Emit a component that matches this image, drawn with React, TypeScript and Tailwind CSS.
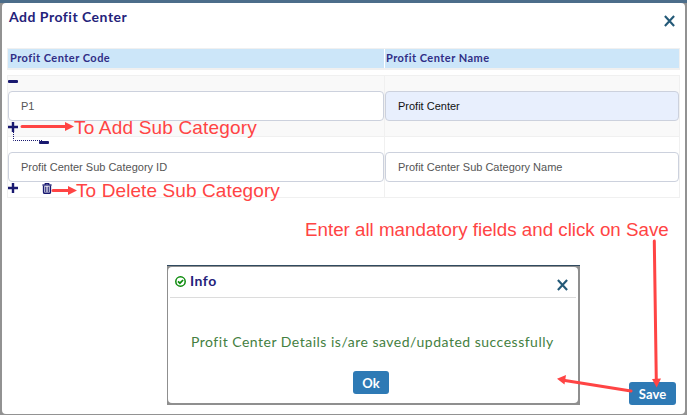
import React from "react";

const sans = "font-['Liberation_Sans',Arial,sans-serif]";
const lato = "font-['Lato',sans-serif]";

function Plus() {
  return (
    <svg width="10" height="10" viewBox="0 0 10 10" className="block">
      <path d="M5 0V10M0 5H10" stroke="#191970" strokeWidth="2.4" />
    </svg>
  );
}

function Minus() {
  return <div className="h-[3px] w-[10px] rounded-[1px] bg-[#191970]" />;
}

function Trash() {
  return (
    <svg width="10" height="11" viewBox="0 0 10 11" className="block" fill="none" stroke="#191970">
      <path d="M.4 2H9.6" strokeWidth="1.3" />
      <path d="M3.2 2V.6H6.8V2" strokeWidth="1.1" />
      <path d="M1.6 2.5V9.3Q1.6 10.3 2.6 10.3H7.4Q8.4 10.3 8.4 9.3V2.5" strokeWidth="1.5" />
      <path d="M3.5 3.6V9.2M5 3.6V9.2M6.5 3.6V9.2" strokeWidth=".8" />
    </svg>
  );
}

function Close() {
  return (
    <svg width="11" height="12" viewBox="0 0 11 12" className="block">
      <path d="M.9 1L10.1 11M10.1 1L.9 11" stroke="#245a78" strokeWidth="2.1" />
    </svg>
  );
}

function Field({ children, filled }: { children: React.ReactNode; filled?: boolean }) {
  return (
    <div
      className={`flex h-[30px] items-center rounded-[4px] border border-[#ccd1dd] pl-3 text-[11px] ${sans} ${
        filled ? "bg-[#e8effd] text-[#111]" : "bg-white text-[#555]"
      }`}
    >
      {children}
    </div>
  );
}

function InfoDialog() {
  return (
    <div className="absolute left-[167px] top-[265px] h-[140px] w-[413px] border-t border-[#304a60] bg-[#8f8f8f] pb-[2px] pl-[1px] pr-[2px] pt-[1px]">
      <div className="flex h-[136px] flex-col rounded-[4px] bg-white">
        <div className="mx-[2px] flex h-[31px] items-start justify-between border-b border-[#dcdcdc] pl-[5px] pr-[8px]">
          <div className="flex items-center pt-[5px]">
            <svg width="11" height="11" viewBox="0 0 11 11" fill="none" stroke="#0a8a0a">
              <circle cx="5.5" cy="5.5" r="4.7" strokeWidth="1.5" />
              <path d="M3 5.4L4.9 7.2L8.1 4" strokeWidth="1.7" />
            </svg>
            <span className={`ml-[4px] text-[14px] font-bold leading-[18px] tracking-[0.5px] text-[#24227a] ${lato}`}>Info</span>
          </div>
          <div className="pt-[12px]"><Close /></div>
        </div>
        <div className={`mt-[35px] whitespace-nowrap pl-[23px] text-[14px] leading-[18px] tracking-[0.5px] text-[#44803f] ${lato}`}>
          Profit Center Details is/are saved/updated successfully
        </div>
        <button className={`ml-[185px] mt-[20px] h-[23px] w-[36px] rounded-[3px] bg-[#2e7ab5] text-[13px] font-bold leading-[22px] tracking-[0.1px] text-white ${lato}`}>
          Ok
        </button>
      </div>
    </div>
  );
}

function Notes() {
  const text = `absolute whitespace-nowrap leading-[20px] text-[#ff4444] ${sans}`;
  return (
    <>
      <span className={`${text} left-[74px] top-[118px] text-[19px] tracking-[0.18px]`}>To Add Sub Category</span>
      <span className={`${text} left-[76px] top-[181px] text-[19px] tracking-[0.1px]`}>To Delete Sub Category</span>
      <span className={`${text} left-[305px] top-[220px] text-[18.75px]`}>Enter all mandatory fields and click on Save</span>
      <svg className="absolute left-0 top-0" width="687" height="415" fill="#ff4444" stroke="#ff4444">
        <path d="M22 126.5H67M53 190.5H71M654.3 241L656.3 381M631 391L565 380.5" strokeWidth="3" strokeLinecap="round" fill="none" />
        <path stroke="none" d="M65 122L74 126.5L65 131ZM68 186L77 190.5L68 195ZM652 379L661 378.5L656.7 387.5ZM566 375L557 378.7L564.5 384.5Z" />
      </svg>
    </>
  );
}

export default function App() {
  return (
    <div className="relative h-[415px] w-[687px] overflow-hidden border-t-[3px] border-[#4c6d8a] bg-[#929292] pl-[2px] pr-[2px]">
      <div className="h-[411px] rounded-[4px] bg-white pl-[5px] pr-[5px]">
        <header className="flex h-[45px] items-start justify-between pl-[2px] pr-[5px]">
          <h1 className={`pt-[5px] text-[14px] font-bold leading-[18px] tracking-[0.5px] text-[#24227a] ${lato}`}>Add Profit Center</h1>
          <div className="pt-[12px]"><Close /></div>
        </header>
        <div className={`grid h-[22px] grid-cols-[376px_1fr] gap-x-px border border-b-2 border-[#f0f0f0] text-[11px] font-bold leading-[18px] tracking-[0.48px] text-[#302e86] ${lato}`}>
          <div className="bg-[#cce6f9] pl-[2px]">Profit Center Code</div>
          <div className="bg-[#cce6f9] pl-[1px]">Profit Center Name</div>
        </div>
        <div className="mt-[5px] border border-[#f0f0f0]">
          <div className="grid h-[61px] grid-cols-[377px_1fr] border-b border-[#f0f0f0] bg-[#f9f9f9]">
            <div className="border-r border-[#f0f0f0]">
              <div className="flex h-[15px] items-start pt-[4px]"><Minus /></div>
              <Field>P1</Field>
              <div className="pt-[1px]"><Plus /></div>
            </div>
            <div className="pt-[15px]"><Field filled>Profit Center</Field></div>
          </div>
          <div className="grid h-[60px] grid-cols-[377px_1fr]">
            <div className="border-r border-[#f0f0f0]">
              <div className="flex h-[15px] items-start pl-[31px] pt-[4px]"><Minus /></div>
              <Field>Profit Center Sub Category ID</Field>
              <div className="flex items-start pt-[1px]">
                <Plus />
                <div className="ml-[24px]"><Trash /></div>
              </div>
            </div>
            <div className="pt-[15px]"><Field>Profit Center Sub Category Name</Field></div>
          </div>
        </div>
        <div className="mr-[4px] mt-[184px] flex justify-end">
          <button className={`h-[23px] w-[47px] rounded-[3px] bg-[#2e7ab5] text-[13px] font-bold leading-[22px] tracking-[0.1px] text-white ${lato}`}>Save</button>
        </div>
      </div>
      <svg className="absolute left-0 top-0" width="60" height="160" fill="none" stroke="#191970">
        <path d="M13.5 129V137.5H43" strokeDasharray="1 1" />
      </svg>
      <div className="absolute -top-[3px] left-0 h-[415px] w-[687px]">
        <InfoDialog />
        <Notes />
      </div>
    </div>
  );
}
